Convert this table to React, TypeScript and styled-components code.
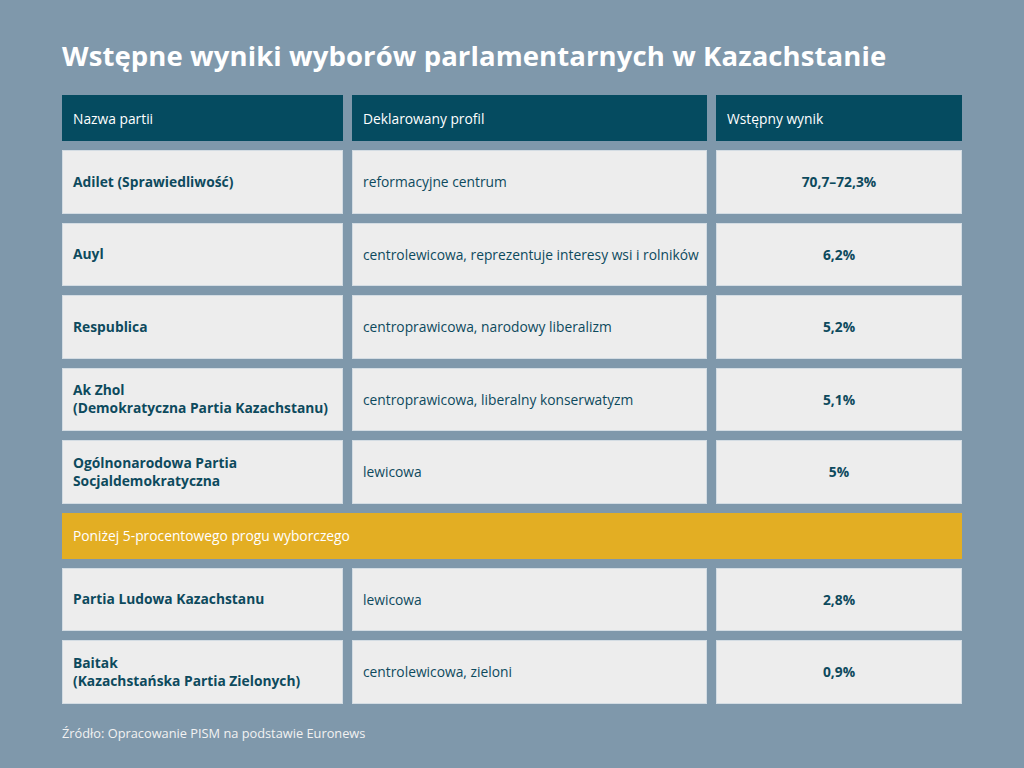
import React from 'react'
import styled, { createGlobalStyle } from 'styled-components'

const Navy = '#054b60'
const Ink = '#0d4a5d'
const Page = '#7f98ab'
const Cell = '#ededed'
const Gold = '#e3ae23'

type Row = { name: string[]; profile: string; result: string }

const above: Row[] = [
  { name: ['Adilet (Sprawiedliwość)'], profile: 'reformacyjne centrum', result: '70,7–72,3%' },
  { name: ['Auyl'], profile: 'centrolewicowa, reprezentuje interesy wsi i rolników', result: '6,2%' },
  { name: ['Respublica'], profile: 'centroprawicowa, narodowy liberalizm', result: '5,2%' },
  {
    name: ['Ak Zhol', '(Demokratyczna Partia Kazachstanu)'],
    profile: 'centroprawicowa, liberalny konserwatyzm',
    result: '5,1%',
  },
  { name: ['Ogólnonarodowa Partia', 'Socjaldemokratyczna'], profile: 'lewicowa', result: '5%' },
]

const below: Row[] = [
  { name: ['Partia Ludowa Kazachstanu'], profile: 'lewicowa', result: '2,8%' },
  {
    name: ['Baitak', '(Kazachstańska Partia Zielonych)'],
    profile: 'centrolewicowa, zieloni',
    result: '0,9%',
  },
]

export default function App() {
  const renderRow = (row: Row) => (
    <React.Fragment key={row.name[0]}>
      <Party>
        {row.name.map(line => (
          <span key={line}>{line}</span>
        ))}
      </Party>
      <Profile>{row.profile}</Profile>
      <Result>{row.result}</Result>
    </React.Fragment>
  )

  return (
    <>
      <GlobalStyle />
      <Frame>
        <Title>Wstępne wyniki wyborów parlamentarnych w Kazachstanie</Title>
        <Table>
          <Head>Nazwa partii</Head>
          <Head>Deklarowany profil</Head>
          <Head>Wstępny wynik</Head>
          {above.map(renderRow)}
          <Threshold>Poniżej 5-procentowego progu wyborczego</Threshold>
          {below.map(renderRow)}
        </Table>
        <Source>Źródło: Opracowanie PISM na podstawie Euronews</Source>
      </Frame>
    </>
  )
}

const GlobalStyle = createGlobalStyle`
  html, body {
    margin: 0;
    background: ${Page};
  }
  body {
    font-family: 'Open Sans', 'Noto Sans', sans-serif;
  }
`

const Frame = styled.div`
  width: 1024px;
  height: 768px;
  box-sizing: border-box;
  padding: 37px 62px 0;
  background: ${Page};
`

const Title = styled.h1`
  margin: 0 0 21px;
  height: 37px;
  color: #ffffff;
  font-size: 27.5px;
  font-weight: 700;
  line-height: 37px;
  letter-spacing: 0.1px;
`

const Table = styled.div`
  display: grid;
  grid-template-columns: 281px 355px 246px;
  grid-template-rows: 46px repeat(5, 63.5px) 46px repeat(2, 63.5px);
  gap: 9px;
`

const Head = styled.div`
  display: flex;
  align-items: center;
  padding: 0 11px;
  background: ${Navy};
  color: #ffffff;
  font-size: 13.8px;
`

const BodyCell = styled.div`
  display: flex;
  align-items: center;
  box-sizing: border-box;
  padding: 0 10px;
  background: ${Cell};
  border: 1px solid #d3dce3;
  color: ${Ink};
  font-size: 13.8px;
`

const Party = styled(BodyCell)`
  flex-direction: column;
  align-items: flex-start;
  justify-content: center;
  font-weight: 700;
  line-height: 18px;
`

const Profile = styled(BodyCell)`
  white-space: nowrap;
`

const Result = styled(BodyCell)`
  justify-content: center;
  font-weight: 700;
`

const Threshold = styled.div`
  grid-column: 1 / -1;
  display: flex;
  align-items: center;
  padding: 0 11px;
  background: ${Gold};
  color: #ffffff;
  font-size: 13.8px;
`

const Source = styled.p`
  margin: 20px 0 0;
  color: #f2f2f2;
  font-size: 12.8px;
`
